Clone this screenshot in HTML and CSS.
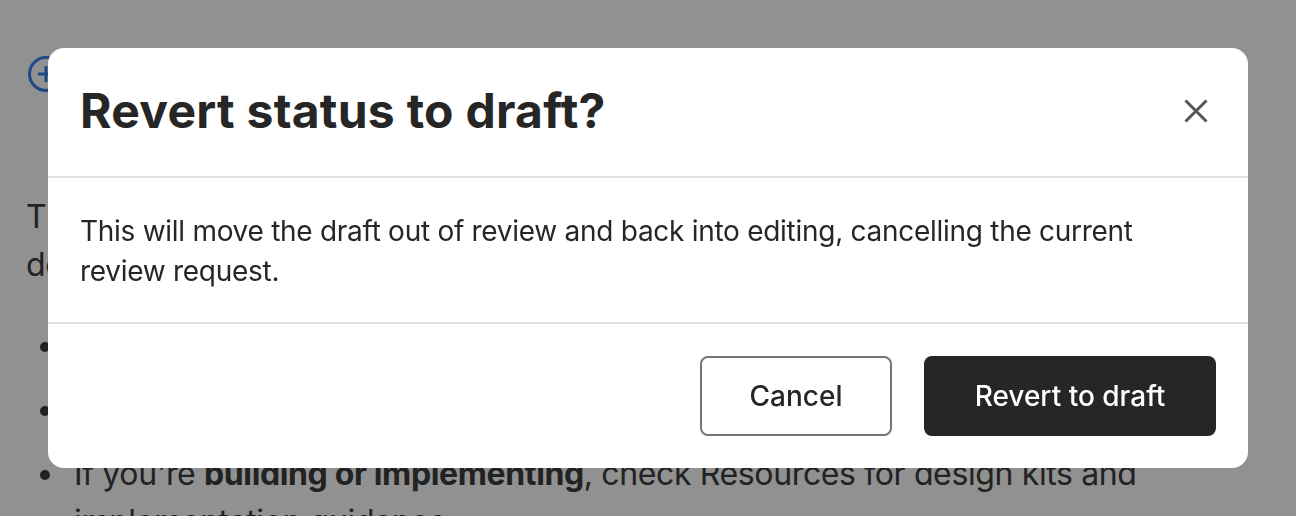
FILE: index.html
```html
<!DOCTYPE html>
<html lang="en">
<head>
    <meta charset="UTF-8">
    <meta name="viewport" content="width=device-width, initial-scale=1.0">
    <title>Revert status to draft</title>
    <link rel="stylesheet" href="styles.css">
</head>
<body>
    <div class="page">
        <svg class="add-icon" width="36" height="36" viewBox="0 0 36 36" fill="none" stroke="#3682e8" stroke-width="3">
            <circle cx="18" cy="18" r="16.5"/>
            <path d="M10 18h16M18 10v16"/>
        </svg>
        <p class="intro">This section collects the guidance you need for working with the<br>design system and its documentation.</p>
        <ul class="guide-list">
            <li>If you're <b>new here</b>, start with the overview</li>
            <li>If you're <b>designing</b>, check the foundations</li>
            <li>If you're <b>building or implementing</b>, check Resources for design kits and<br>implementation guidance.</li>
        </ul>
    </div>

    <div class="overlay">
        <div class="modal">
            <div class="modal-header">
                <h2>Revert status to draft?</h2>
                <button class="close-btn" aria-label="Close">
                    <svg width="24" height="24" viewBox="0 0 24 24" fill="none" stroke="#555" stroke-width="3">
                        <path d="M1.5 1.5l21 21M22.5 1.5l-21 21"/>
                    </svg>
                </button>
            </div>
            <div class="modal-body">
                This will move the draft out of review and back into editing, cancelling the current review request.
            </div>
            <div class="modal-footer">
                <button class="btn btn-outline">Cancel</button>
                <button class="btn btn-dark">Revert to draft</button>
            </div>
        </div>
    </div>
</body>
</html>
```

FILE: styles.css
```css
html, body {
    height: 100%;
}

body {
    margin: 0;
    overflow: hidden;
    font-family: Inter, "Liberation Sans", sans-serif;
    background: #fff;
}

.page {
    height: 100%;
    box-sizing: border-box;
    overflow: hidden;
    padding: 56px 26px 0;
    color: #3c3c3c;
    font-size: 32px;
    line-height: 48px;
    letter-spacing: -0.37px;
}

.add-icon {
    display: block;
    margin-left: 2px;
}

.intro {
    margin: 101px 0 33px;
}

.guide-list {
    margin: 0;
    padding-left: 48px;
    list-style: none;
}

.guide-list li {
    margin-bottom: 16px;
}

.guide-list li::before {
    content: "";
    display: inline-block;
    width: 10px;
    height: 10px;
    margin-left: -34px;
    margin-right: 24px;
    border-radius: 50%;
    background: #3c3c3c;
    vertical-align: 5px;
}

.overlay {
    position: fixed;
    inset: 0;
    background: rgba(0, 0, 0, 0.43);
}

.modal {
    position: absolute;
    top: 48px;
    left: 48px;
    width: 1200px;
    height: 420px;
    color: #262626;
    background: #fff;
    border-radius: 16px;
    display: flex;
    flex-direction: column;
}

.modal-header {
    height: 125px;
    padding: 0 40px 3px 32px;
    border-bottom: 2px solid #e0e0e0;
    display: flex;
    align-items: center;
    justify-content: space-between;
}

.modal-header h2 {
    margin: 0;
    font-size: 48px;
    font-weight: 700;
    letter-spacing: 0.27px;
}

.close-btn {
    background: none;
    border: none;
    padding: 0;
    display: flex;
    cursor: pointer;
}

.modal-body {
    height: 146px;
    box-sizing: border-box;
    padding: 33px 32px 0;
    font-size: 28px;
    line-height: 40px;
    letter-spacing: -0.28px;
    border-bottom: 2px solid #e0e0e0;
}

.modal-footer {
    flex: 1;
    padding: 32px;
    display: flex;
    justify-content: flex-end;
    gap: 32px;
    align-items: flex-start;
}

.btn {
    height: 80px;
    width: 192px;
    border-radius: 8px;
    font-family: inherit;
    font-size: 28px;
    font-weight: 500;
    cursor: pointer;
}

.btn-outline {
    background: #fff;
    border: 2px solid #757575;
    color: #262626;
}

.btn-dark {
    width: 292px;
    background: #262626;
    border: none;
    color: #fff;
}
```
